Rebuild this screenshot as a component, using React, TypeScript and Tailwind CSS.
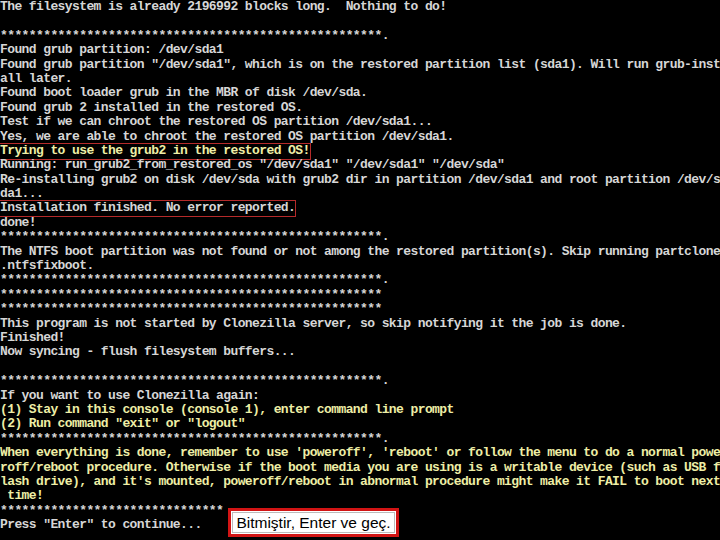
const STARS = '*'.repeat(53);

type Line = { text: string; tone?: 'white' | 'yellow'; boxed?: boolean };

const lines: Line[] = [
  { text: 'The filesystem is already 2196992 blocks long.  Nothing to do!' },
  { text: '' },
  { text: STARS + '.' },
  { text: 'Found grub partition: /dev/sda1' },
  { text: 'Found grub partition "/dev/sda1", which is on the restored partition list (sda1). Will run grub-inst' },
  { text: 'all later.' },
  { text: 'Found boot loader grub in the MBR of disk /dev/sda.' },
  { text: 'Found grub 2 installed in the restored OS.' },
  { text: 'Test if we can chroot the restored OS partition /dev/sda1...' },
  { text: 'Yes, we are able to chroot the restored OS partition /dev/sda1.' },
  { text: 'Trying to use the grub2 in the restored OS!', tone: 'yellow', boxed: true },
  { text: 'Running: run_grub2_from_restored_os "/dev/sda1" "/dev/sda1" "/dev/sda"' },
  { text: 'Re-installing grub2 on disk /dev/sda with grub2 dir in partition /dev/sda1 and root partition /dev/s' },
  { text: 'da1...' },
  { text: 'Installation finished. No error reported.', boxed: true },
  { text: 'done!' },
  { text: STARS + '.' },
  { text: 'The NTFS boot partition was not found or not among the restored partition(s). Skip running partclone' },
  { text: '.ntfsfixboot.' },
  { text: STARS + '.' },
  { text: STARS },
  { text: STARS },
  { text: 'This program is not started by Clonezilla server, so skip notifying it the job is done.' },
  { text: 'Finished!' },
  { text: 'Now syncing - flush filesystem buffers...' },
  { text: '' },
  { text: STARS + '.' },
  { text: 'If you want to use Clonezilla again:' },
  { text: '(1) Stay in this console (console 1), enter command line prompt', tone: 'yellow' },
  { text: '(2) Run command "exit" or "logout"', tone: 'yellow' },
  { text: STARS + '.' },
  { text: "When everything is done, remember to use 'poweroff', 'reboot' or follow the menu to do a normal powe", tone: 'yellow' },
  { text: 'roff/reboot procedure. Otherwise if the boot media you are using is a writable device (such as USB f', tone: 'yellow' },
  { text: "lash drive), and it's mounted, poweroff/reboot in abnormal procedure might make it FAIL to boot next", tone: 'yellow' },
  { text: ' time!', tone: 'yellow' },
  // the rest of this row sits under the callout
  { text: '*'.repeat(31) },
  { text: 'Press "Enter" to continue...' },
];

export default function App() {
  return (
    <div className="w-[720px] h-[540px] bg-black overflow-hidden relative font-['Liberation_Mono',monospace] font-bold text-[13px] tracking-[-0.6px]">
      {/* console output */}
      <div className="flex flex-col">
        {lines.map((l, i) => (
          <div
            key={i}
            className={
              'h-[14.4px] leading-[14.4px] whitespace-pre ' +
              (l.tone === 'yellow' ? 'text-[#eeeea6]' : 'text-[#d6d6d6]')
            }
          >
            {l.boxed ? (
              <span className="inline-block h-[15px] leading-[14px] outline outline-[1.5px] outline-[#b52a2a]">
                {l.text}
              </span>
            ) : (
              l.text
            )}
          </div>
        ))}
      </div>

      {/* callout */}
      <div className="absolute left-[228px] top-[508px] w-[171px] h-[29px] border-[3px] border-[#d21414] bg-white flex items-center justify-center">
        <div className="absolute inset-[1px] border border-[#bbbbbb]" />
        <span className="relative font-['Liberation_Sans',Arial,sans-serif] font-normal tracking-normal text-[15.5px] text-black leading-none">
          Bitmiştir, Enter ve geç.
        </span>
      </div>
    </div>
  );
}
